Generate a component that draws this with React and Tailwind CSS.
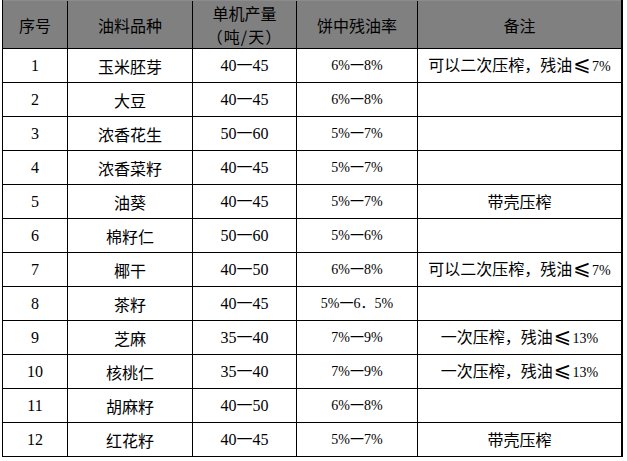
const ROWS = [
  ['1', '玉米胚芽', '40一45', '6%一8%', '可以二次压榨，残油', '7%'],
  ['2', '大豆', '40一45', '6%一8%', ''],
  ['3', '浓香花生', '50一60', '5%一7%', ''],
  ['4', '浓香菜籽', '40一45', '5%一7%', ''],
  ['5', '油葵', '40一45', '5%一7%', '带壳压榨'],
  ['6', '棉籽仁', '50一60', '5%一6%', ''],
  ['7', '椰干', '40一50', '6%一8%', '可以二次压榨，残油', '7%'],
  ['8', '茶籽', '40一45', '5%一6．5%', ''],
  ['9', '芝麻', '35一40', '7%一9%', '一次压榨，残油', '13%'],
  ['10', '核桃仁', '35一40', '7%一9%', '一次压榨，残油', '13%'],
  ['11', '胡麻籽', '40一50', '6%一8%', ''],
  ['12', '红花籽', '40一45', '5%一7%', '带壳压榨'],
]

const cell = 'flex items-center justify-center border-r border-black text-center'

export default function App() {
  return (
    <div className="w-[627px] h-[461px] bg-white pl-[2px] font-['Liberation_Serif','Noto_Sans_CJK_SC',serif] text-black">
      <div className="w-[621px] border-l border-black border-r-2 border-r-black">
        {/* Header */}
        <div className="flex h-[49px] border-b border-black bg-[#808080] border-t border-t-[#8c8c8c] font-['Noto_Sans_CJK_SC',sans-serif] text-[16px]">
          <div className={`${cell} w-[65px]`}>序号</div>
          <div className={`${cell} w-[125px]`}>油料品种</div>
          <div className={`${cell} w-[104px] flex-col leading-[23px]`}>
            <span>单机产量</span>
            <span className="tracking-[1px]">（吨/天）</span>
          </div>
          <div className={`${cell} w-[121px]`}>饼中残油率</div>
          <div className="flex flex-1 items-center justify-center">备注</div>
        </div>

        {ROWS.map((r) => (
          <div key={r[0]} className="flex h-[34px] border-b border-black text-[16px]">
            <div className={`${cell} w-[65px]`}>{r[0]}</div>
            <div className={`${cell} w-[125px] font-['Noto_Sans_CJK_SC',sans-serif]`}>{r[1]}</div>
            <div className={`${cell} w-[104px]`}>{r[2]}</div>
            <div className={`${cell} w-[121px] text-[14px]`}>{r[3]}</div>
            <div className="flex flex-1 items-center justify-center">
              <p className="leading-[20px]">
                <span className="font-['Noto_Sans_CJK_SC',sans-serif]">{r[4]}</span>
                {r[5] && (
                  <>
                    <span className="font-['DejaVu_Sans',sans-serif] text-[21px] leading-none mx-[1px]">⩽</span>
                    <span className="text-[14px]">{r[5]}</span>
                  </>
                )}
              </p>
            </div>
          </div>
        ))}
      </div>
    </div>
  )
}
